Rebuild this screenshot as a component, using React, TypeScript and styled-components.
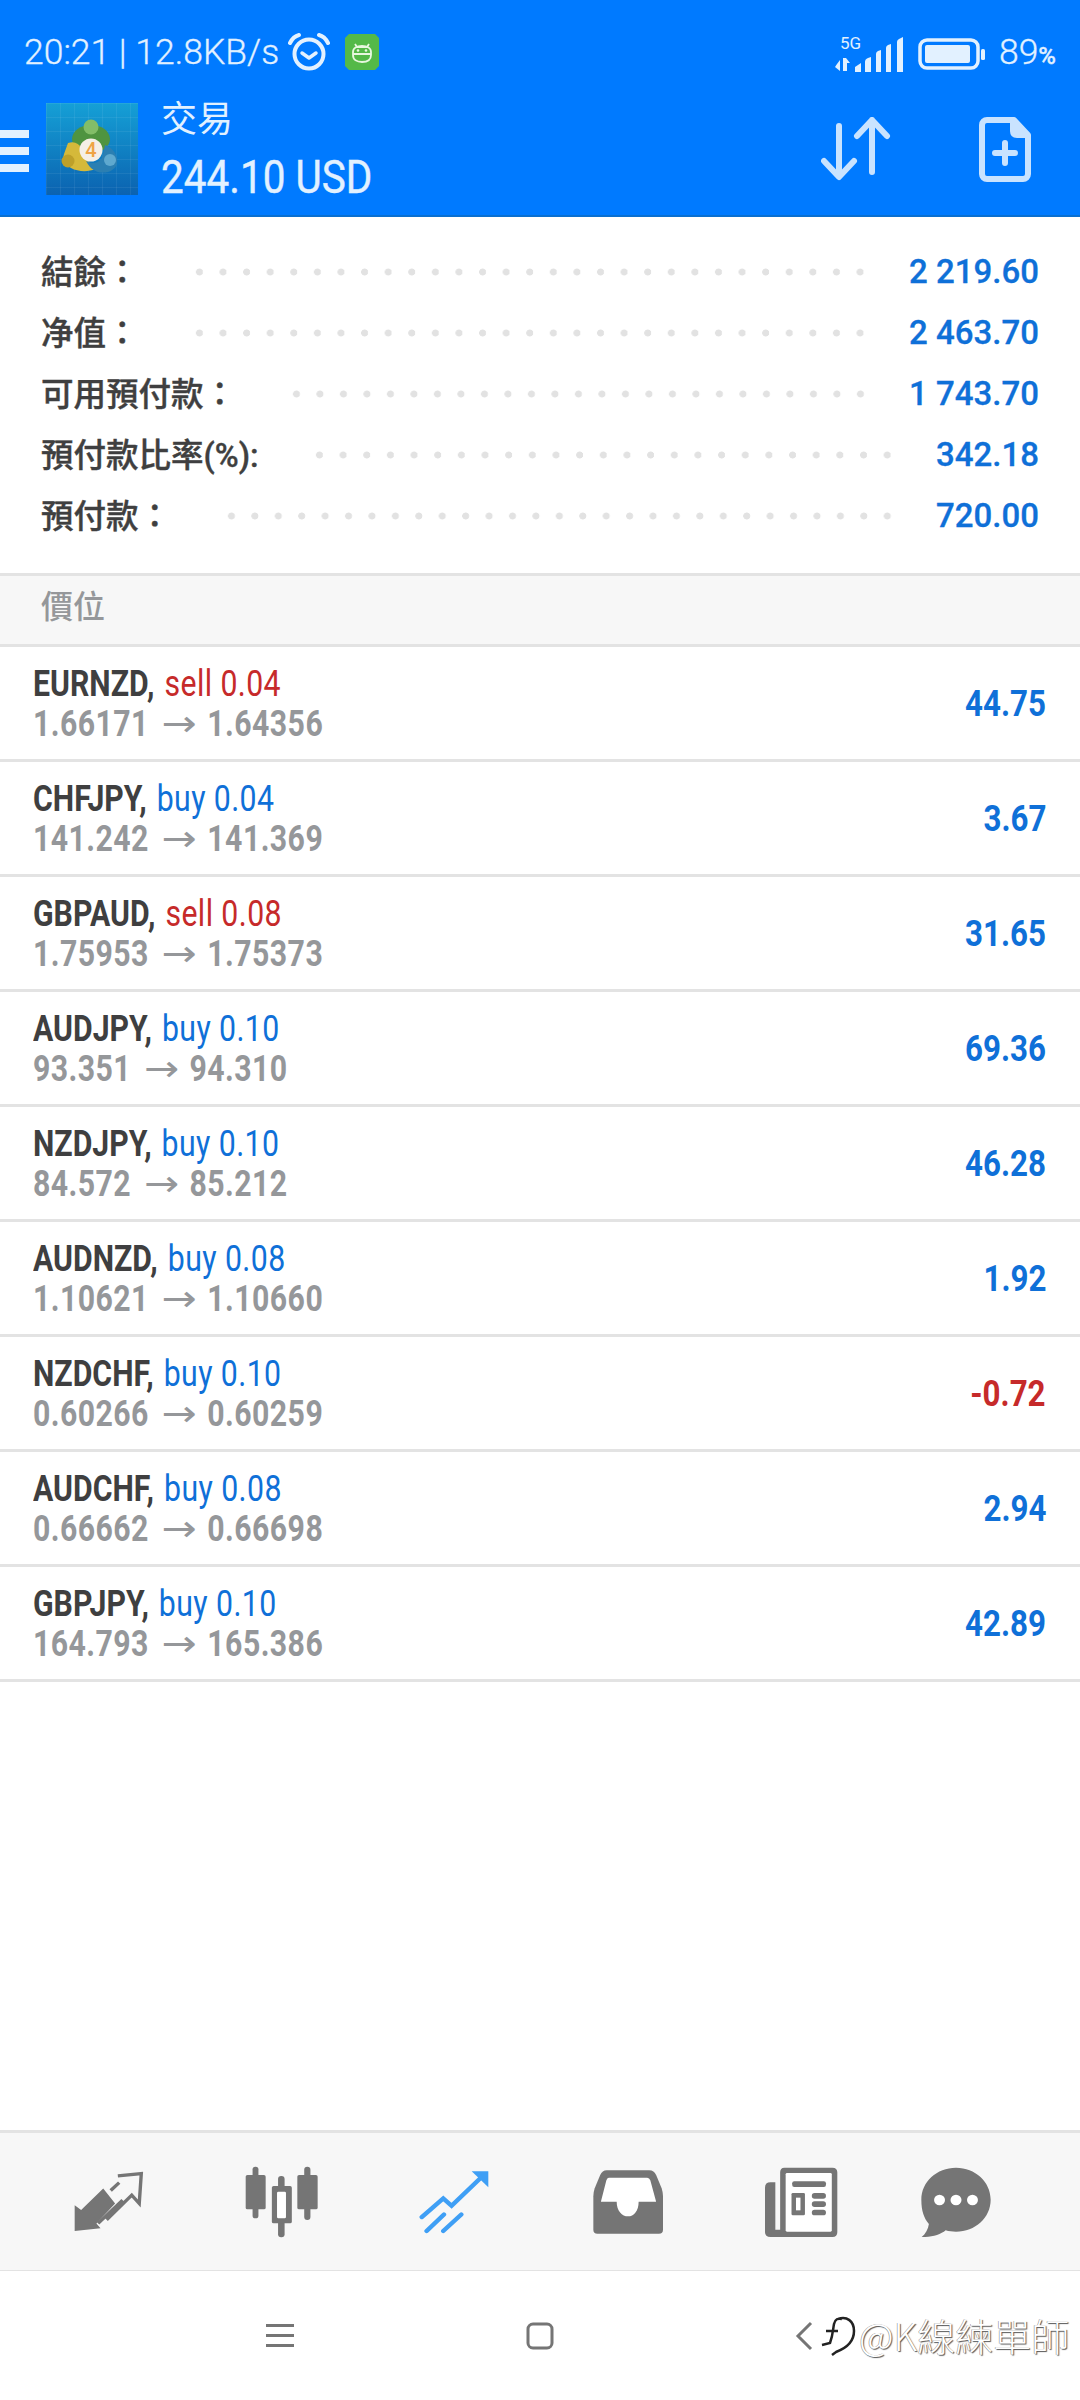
import styled, { createGlobalStyle } from 'styled-components';

const GlobalStyle = createGlobalStyle`
  html, body {
    margin: 0;
    padding: 0;
    background: #fff;
  }
`;

const colors = {
  blue: '#007aff',
  onBlue: '#e2f1ff',
  iconOnBlue: '#c9e3ff',
  dark: '#3f3f40',
  gray: '#95979a',
  valueBlue: '#0f70d8',
  red: '#c62a2a',
  line: '#e3e3e3',
  panel: '#f7f7f7',
  icon: '#757575',
};

const Screen = styled.div`
  width: 1080px;
  height: 2400px;
  display: flex;
  flex-direction: column;
  overflow: hidden;
  background: #fff;
  font-family: Roboto, 'Noto Sans CJK TC', sans-serif;
`;

const Header = styled.header`
  height: 217px;
  flex: none;
  box-sizing: border-box;
  background: ${colors.blue};
  border-bottom: 2px solid #0a6fd0;
  display: flex;
  flex-direction: column;
`;

const StatusBar = styled.div`
  height: 100px;
  flex: none;
  box-sizing: border-box;
  padding: 32px 24px 0 24px;
  display: flex;
  align-items: flex-start;
  color: ${colors.onBlue};
`;

const StatusText = styled.span`
  font-size: 35.5px;
  font-weight: 300;
  line-height: 40px;
  white-space: nowrap;
  -webkit-text-stroke: 0.3px ${colors.onBlue};
`;

const StatusLeft = styled.div`
  display: flex;
  align-items: center;
  gap: 9px;
`;

const StatusRight = styled.div`
  margin-left: auto;
  display: flex;
  align-items: center;
  gap: 14px;
`;

const Percent = styled.small`
  font-size: 24px;
  font-weight: 500;
`;

const Badge = styled.svg`
  margin-left: 6px;
`;

const Signal = styled.svg`
  margin-top: -6px;
`;

const ActionBar = styled.div`
  flex: 1;
  display: flex;
  align-items: flex-start;
`;

const MenuButton = styled.div`
  width: 29px;
  margin-top: 30px;
  display: flex;
  flex-direction: column;
  gap: 9px;

  i {
    display: block;
    height: 8px;
    background: ${colors.onBlue};
  }
`;

const Logo = styled.svg`
  margin: 3px 0 0 17px;
  flex: none;
`;

const Titles = styled.div`
  margin: -4px 0 0 23px;
  color: ${colors.onBlue};
`;

const Title = styled.div`
  font-size: 36px;
  line-height: 40px;
  font-family: 'Noto Sans CJK TC', sans-serif;
`;

const Balance = styled.div`
  margin-top: 14px;
  font-size: 46px;
  line-height: 54px;
  white-space: nowrap;
  transform: scaleX(0.88);
  transform-origin: left center;
  -webkit-text-stroke: 0.4px ${colors.onBlue};
`;

const Actions = styled.div`
  margin-left: auto;
  display: flex;
  align-items: flex-start;
  padding: 17px 49px 0 0;
  gap: 88px;
`;

const Summary = styled.section`
  height: 356px;
  flex: none;
  box-sizing: border-box;
  padding-top: 24px;
`;

const SummaryRow = styled.div`
  height: 61px;
  padding: 0 41px;
  display: flex;
  align-items: center;
`;

const SummaryLabel = styled.span`
  margin-bottom: 4px;
  font-size: 32.5px;
  font-weight: 500;
  color: ${colors.dark};
  white-space: nowrap;
  -webkit-text-stroke: 0.4px ${colors.dark};
`;

const Dots = styled.span`
  flex: 1;
  height: 8px;
  margin: 0 37px 0 49px;
  background-image: radial-gradient(circle, #e2e2e2 3.2px, transparent 3.8px);
  background-size: 23px 8px;
  background-repeat: space no-repeat;
`;

const SummaryValue = styled.span`
  font-size: 33px;
  font-weight: 500;
  color: ${colors.valueBlue};
  white-space: nowrap;
  -webkit-text-stroke: 0.3px ${colors.valueBlue};
`;

const SectionTitle = styled.div`
  height: 74px;
  flex: none;
  box-sizing: border-box;
  padding: 0 41px;
  background: ${colors.panel};
  border-top: 3px solid ${colors.line};
  border-bottom: 3px solid ${colors.line};
  font-family: 'Noto Sans CJK TC', sans-serif;
  font-size: 32px;
  font-weight: 500;
  line-height: 56px;
  color: ${colors.gray};
`;

const Positions = styled.div`
  flex: none;
`;

const PositionRow = styled.div`
  height: 115px;
  box-sizing: border-box;
  padding: 2px 34px 0 33px;
  border-bottom: 3px solid ${colors.line};
  display: flex;
  align-items: center;
  justify-content: space-between;
`;

const PositionInfo = styled.div`
  font-size: 36px;
  line-height: 40px;
  white-space: nowrap;
  transform: scaleX(0.84);
  transform-origin: left center;
`;

const Symbol = styled.b`
  font-weight: 700;
  color: ${colors.dark};
`;

const Side = styled.span<{ $sell: boolean }>`
  margin-left: 3px;
  letter-spacing: 0.5px;
  color: ${(p) => (p.$sell ? colors.red : colors.valueBlue)};
`;

const Prices = styled.div`
  font-weight: 700;
  letter-spacing: 0.5px;
  color: ${colors.gray};
`;

const Arrow = styled.span`
  display: inline-block;
  margin: 0 18px 0 21px;
  font-family: 'DejaVu Sans', sans-serif;
  font-weight: 400;
  line-height: 36px;
  transform: scaleX(1.39);
`;

const Profit = styled.div<{ $loss: boolean }>`
  font-size: 36px;
  font-weight: 700;
  color: ${(p) => (p.$loss ? colors.red : colors.valueBlue)};
  transform: scaleX(0.87);
  transform-origin: right center;
`;

const Spacer = styled.div`
  flex: 1;
`;

const TabBar = styled.nav`
  height: 141px;
  flex: none;
  box-sizing: border-box;
  padding-left: 22px;
  background: ${colors.panel};
  border-top: 3px solid ${colors.line};
  border-bottom: 1px solid ${colors.line};
  display: grid;
  grid-template-columns: 174px 170px 176px 171px 176px 133px;
  align-items: center;
  justify-items: center;
`;

const SystemBar = styled.div`
  height: 129px;
  flex: none;
  box-sizing: border-box;
  position: relative;
  display: flex;
  align-items: center;
  padding: 0 0 0 266px;
`;

const SystemKey = styled.svg<{ $gap: number }>`
  margin-right: ${(p) => p.$gap}px;
  flex: none;
`;

const Watermark = styled.div`
  position: absolute;
  left: 820px;
  top: 40px;
  display: flex;
  align-items: center;
  gap: 3px;
  font-family: 'Noto Sans CJK TC', sans-serif;
  font-size: 38px;
  line-height: 48px;
  font-weight: 300;
  color: #fff;
  white-space: nowrap;
  text-shadow: 1px 1px 1px #555, -0.5px -0.5px 0 #888;
`;

const summary = [
  { label: '結餘：', value: '2 219.60' },
  { label: '净值：', value: '2 463.70' },
  { label: '可用預付款：', value: '1 743.70' },
  { label: '預付款比率(%):', value: '342.18' },
  { label: '預付款：', value: '720.00' },
];

const positions = [
  { symbol: 'EURNZD', side: 'sell', lots: '0.04', open: '1.66171', close: '1.64356', profit: '44.75' },
  { symbol: 'CHFJPY', side: 'buy', lots: '0.04', open: '141.242', close: '141.369', profit: '3.67' },
  { symbol: 'GBPAUD', side: 'sell', lots: '0.08', open: '1.75953', close: '1.75373', profit: '31.65' },
  { symbol: 'AUDJPY', side: 'buy', lots: '0.10', open: '93.351', close: '94.310', profit: '69.36' },
  { symbol: 'NZDJPY', side: 'buy', lots: '0.10', open: '84.572', close: '85.212', profit: '46.28' },
  { symbol: 'AUDNZD', side: 'buy', lots: '0.08', open: '1.10621', close: '1.10660', profit: '1.92' },
  { symbol: 'NZDCHF', side: 'buy', lots: '0.10', open: '0.60266', close: '0.60259', profit: '-0.72' },
  { symbol: 'AUDCHF', side: 'buy', lots: '0.08', open: '0.66662', close: '0.66698', profit: '2.94' },
  { symbol: 'GBPJPY', side: 'buy', lots: '0.10', open: '164.793', close: '165.386', profit: '42.89' },
];

const AlarmIcon = () => (
  <svg width="42" height="40" viewBox="0 0 42 40" fill="none" stroke={colors.onBlue}>
    <circle cx="21" cy="22" r="14.5" strokeWidth="4" />
    <path d="M14 21l7 5 7-5" strokeWidth="3.5" strokeLinecap="round" strokeLinejoin="round" />
    <path d="M2 11c2-4 5-7 9-8M40 11c-2-4-5-7-9-8" strokeWidth="4" strokeLinecap="round" />
  </svg>
);

const RobotBadge = () => (
  <Badge width="34" height="36" viewBox="0 0 34 36">
    <path d="M4 0h26l4 4v28l-4 4H4l-4-4V4z" fill="#54b948" />
    <path d="M10 10l2 3h10l2-3M8 18c0-4 4-6 9-6s9 2 9 6v3c0 5-4 7-9 7s-9-2-9-7zM8 20h18" fill="none" stroke="#e8f7df" strokeWidth="1.8" />
    <circle cx="13" cy="16.500" r="1.300" fill="#e8f7df" />
    <circle cx="21" cy="16.500" r="1.300" fill="#e8f7df" />
  </Badge>
);

const SignalIcon = () => (
  <Signal width="69" height="44" viewBox="0 -6 69 44" fill={colors.onBlue}>
    <text x="5" y="14" fontSize="17" fontFamily="Roboto, sans-serif">5G</text>
    <path d="M2 29l3-4v11l-5-4zM8 23h3l4 5h-3v8H8z" />
    <path d="M20 37v-5l6-4v9zM30 37v-10q0-3 3-4l3-1v15zM41 37V19q0-2 2-3l3-1v22zM51 37V13q0-2 2-3l3-1v28zM62 37V7q0-2 2-3l4-2v35z" />
  </Signal>
);

const BatteryIcon = () => (
  <svg width="67" height="32" viewBox="0 0 67 32">
    <rect x="2" y="2" width="58" height="28" rx="7" fill="none" stroke={colors.onBlue} strokeWidth="3.500" />
    <rect x="7" y="7" width="45" height="18" rx="2" fill={colors.onBlue} />
    <rect x="63" y="11" width="4" height="11" rx="1.500" fill={colors.onBlue} />
  </svg>
);

const Mt4Logo = () => (
  <Logo width="92" height="92" viewBox="0 0 92 92">
    <defs>
      <linearGradient id="logoBg" x1="0" y1="0" x2="0" y2="1">
        <stop offset="0" stopColor="#15a0d6" />
        <stop offset="1" stopColor="#0b62b0" />
      </linearGradient>
      <pattern id="logoGrid" width="14" height="14" patternUnits="userSpaceOnUse">
        <path d="M14 0H0v14" fill="none" stroke="#fff" strokeOpacity="0.12" strokeWidth="1" />
      </pattern>
    </defs>
    <rect width="92" height="92" fill="url(#logoBg)" />
    <rect width="92" height="92" fill="url(#logoGrid)" />
    <ellipse cx="45" cy="36" rx="19" ry="14" fill="#4f9440" />
    <circle cx="45" cy="24" r="7.500" fill="#82bd68" />
    <path d="M22 40c6-2 11 0 14 6l3 9 10 11c-6 3-17 3-24-1-6-4-9-8-7-14z" fill="#d5b93a" />
    <circle cx="22" cy="58" r="6.500" fill="#bda02a" />
    <path d="M40 58c7 4 15 2 17-6l2-10c6 2 11 7 12 14 1 7-3 11-9 13-9 2-17-1-22-11z" fill="#2b7fb2" />
    <circle cx="64" cy="57" r="6" fill="#5fa9cf" />
    <circle cx="45" cy="47" r="11.500" fill="#f5efe6" />
    <text x="45" y="54" fontSize="20" textAnchor="middle" fill="#efa445" fontFamily="Roboto, sans-serif" fontWeight="500">4</text>
  </Logo>
);

const SortIcon = () => (
  <svg width="70" height="64" viewBox="0 0 70 64" fill="none" stroke={colors.iconOnBlue} strokeWidth="6" strokeLinecap="round" strokeLinejoin="round">
    <path d="M18 9v50M3 44l15 16 15-16" />
    <path d="M51 55V3M36 19L51 3l15 16" />
  </svg>
);

const NewOrderIcon = () => (
  <svg width="52" height="66" viewBox="0 0 52 66" fill="none">
    <path d="M8 3h27l14 15v39a5 5 0 0 1-5 5H8a5 5 0 0 1-5-5V8a5 5 0 0 1 5-5z" stroke={colors.iconOnBlue} strokeWidth="6" strokeLinejoin="round" />
    <path d="M31 2l19 19H38q-7 0-7-7z" fill={colors.iconOnBlue} />
    <path d="M26 26v20M16 36h20" stroke={colors.iconOnBlue} strokeWidth="6" strokeLinecap="round" />
  </svg>
);

const TradeTab = () => (
  <svg width="70" height="63" viewBox="214 174 206 190" preserveAspectRatio="none">
    <path d="M216 280l19 15 65-65 35 45-55 60 12 15-76 8z" fill={colors.icon} />
    <path d="M343 192l69-7-6 90-22-25-74 74M347 212l-25 24M285 335l72-70" fill="none" stroke={colors.icon} strokeWidth="10" />
  </svg>
);

const ChartTab = () => (
  <svg width="73" height="72" viewBox="710 158 212 216" preserveAspectRatio="none" fill={colors.icon}>
    <rect x="732" y="160" width="17" height="155" rx="8" />
    <rect x="712" y="185" width="58" height="103" rx="5" />
    <rect x="806" y="188" width="19" height="184" rx="9" />
    <rect x="788" y="218" width="58" height="112" rx="5" />
    <rect x="803" y="235" width="26" height="80" rx="4" fill="#fff" />
    <rect x="882" y="160" width="18" height="160" rx="9" />
    <rect x="862" y="185" width="59" height="103" rx="5" />
  </svg>
);

const PositionsTab = () => (
  <svg width="70" height="65" viewBox="1218 165 202 196" preserveAspectRatio="none" fill="none" stroke="#3f9ff5" strokeWidth="13" strokeLinecap="round">
    <path d="M1226 310l62-56 24 22 92-92" strokeLinejoin="miter" />
    <path d="M1370 172h48v48z" fill="#3f9ff5" stroke="none" />
    <path d="M1240 352l50-50M1288 352l52-50" />
  </svg>
);

const InboxTab = () => (
  <svg width="70" height="64" viewBox="152 167 204 192" preserveAspectRatio="none">
    <path d="M192 168h124q14 0 20 14l16 40q4 12 4 24v100q0 12-12 12H165q-12 0-12-12V246q0-12 4-24l16-40q6-14 19-14z" fill={colors.icon} />
    <path d="M198 190h112q6 0 9 8l17 64h-51c0 28-14 44-31 44s-33-16-33-44h-46l16-64q2-8 7-8z" fill="#fff" />
  </svg>
);

const NewsTab = () => (
  <svg width="73" height="70" viewBox="652 158 212 210" preserveAspectRatio="none">
    <path d="M708 160h140q14 0 14 14v180q0 14-14 14H668q-16 0-16-14V220q0-16 16-16h14v142h14V174q0-14 12-14z" fill={colors.icon} />
    <rect x="712" y="176" width="134" height="176" rx="4" fill="#fff" />
    <g fill={colors.icon}>
      <rect x="731" y="201" width="98" height="17" rx="6" />
      <rect x="729" y="236" width="39" height="67" rx="4" />
      <rect x="788" y="236" width="41" height="17" rx="8" />
      <rect x="788" y="261" width="41" height="17" rx="8" />
      <rect x="788" y="286" width="41" height="17" rx="8" />
    </g>
    <rect x="742" y="250" width="13" height="38" fill="#fff" />
  </svg>
);

const ChatTab = () => (
  <svg width="70" height="70" viewBox="1106 158 204 210" preserveAspectRatio="none">
    <path d="M1208 160c56 0 101 42 101 96s-45 96-101 96c-11 0-21-1-30-4-15 13-40 21-70 20 11-9 19-23 21-39-14-18-22-38-22-73 0-54 45-96 101-96z" fill={colors.icon} />
    <circle cx="1160" cy="257" r="16" fill="#fff" />
    <circle cx="1208" cy="257" r="16" fill="#fff" />
    <circle cx="1256" cy="257" r="16" fill="#fff" />
  </svg>
);

const WatermarkLogo = () => (
  <svg width="36" height="44" viewBox="0 0 36 44" fill="none" stroke="#222" strokeWidth="2.500">
    <path d="M18 6c9-3 16 2 16 12 0 12-10 18-18 21l-4 3M2 32l8-2c3-8 3-14 4-19s4-6 8-5M6 18h12" />
  </svg>
);

export default function App() {
  return (
    <Screen>
      <GlobalStyle />
      <Header>
        <StatusBar>
          <StatusLeft>
            <StatusText>20:21 | 12.8KB/s</StatusText>
            <AlarmIcon />
            <RobotBadge />
          </StatusLeft>
          <StatusRight>
            <SignalIcon />
            <BatteryIcon />
            <StatusText>
              89<Percent>%</Percent>
            </StatusText>
          </StatusRight>
        </StatusBar>
        <ActionBar>
          <MenuButton>
            <i />
            <i />
            <i />
          </MenuButton>
          <Mt4Logo />
          <Titles>
            <Title>交易</Title>
            <Balance>244.10 USD</Balance>
          </Titles>
          <Actions>
            <SortIcon />
            <NewOrderIcon />
          </Actions>
        </ActionBar>
      </Header>

      <Summary>
        {summary.map((row) => (
          <SummaryRow key={row.label}>
            <SummaryLabel>{row.label}</SummaryLabel>
            <Dots />
            <SummaryValue>{row.value}</SummaryValue>
          </SummaryRow>
        ))}
      </Summary>

      <SectionTitle>價位</SectionTitle>

      <Positions>
        {positions.map((pos) => (
          <PositionRow key={pos.symbol}>
            <PositionInfo>
              <div>
                <Symbol>{pos.symbol},</Symbol>{' '}
                <Side $sell={pos.side === 'sell'}>
                  {pos.side} {pos.lots}
                </Side>
              </div>
              <Prices>
                {pos.open}
                <Arrow>→</Arrow>
                {pos.close}
              </Prices>
            </PositionInfo>
            <Profit $loss={pos.profit.startsWith('-')}>{pos.profit}</Profit>
          </PositionRow>
        ))}
      </Positions>

      <Spacer />

      <TabBar>
        <TradeTab />
        <ChartTab />
        <PositionsTab />
        <InboxTab />
        <NewsTab />
        <ChatTab />
      </TabBar>

      <SystemBar>
        <SystemKey $gap={232} width="28" height="25" viewBox="0 0 28 25" fill="#757575">
          <rect width="28" height="3" y="1" />
          <rect width="28" height="3" y="11" />
          <rect width="28" height="3" y="21" />
        </SystemKey>
        <SystemKey $gap={241} width="28" height="28" viewBox="0 0 28 28" fill="none" stroke="#757575" strokeWidth="3">
          <rect x="2" y="2" width="24" height="24" rx="5" />
        </SystemKey>
        <SystemKey $gap={0} width="18" height="30" viewBox="0 0 18 30" fill="none" stroke="#757575" strokeWidth="3">
          <path d="M16 2L3 15l13 13" />
        </SystemKey>
        <Watermark>
          <WatermarkLogo />
          <span>@K線練單師</span>
        </Watermark>
      </SystemBar>
    </Screen>
  );
}
